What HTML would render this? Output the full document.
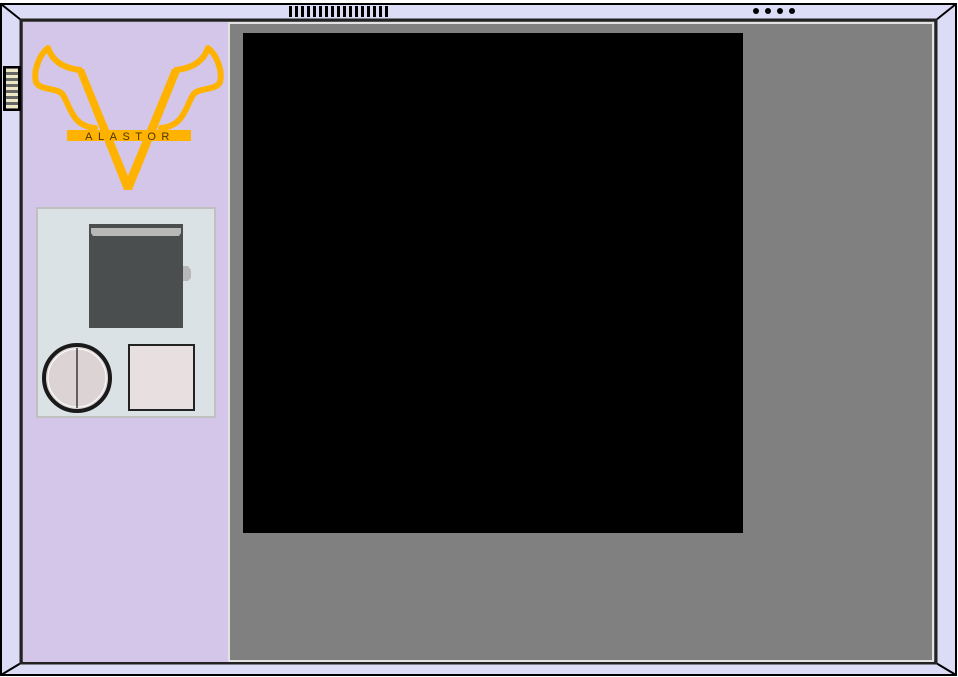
<!DOCTYPE html>
<html><head><meta charset="utf-8"><style>
html,body{margin:0;padding:0;background:#fff;width:958px;height:677px;overflow:hidden}
svg{display:block}
</style></head><body>
<svg width="958" height="677" viewBox="0 0 958 677" xmlns="http://www.w3.org/2000/svg">
<rect x="1" y="4" width="955" height="671" fill="#dcdcf6" stroke="#000" stroke-width="2"/>
<line x1="1" y1="4" x2="21" y2="20" stroke="#000" stroke-width="2"/>
<line x1="956" y1="4" x2="936" y2="20" stroke="#000" stroke-width="2"/>
<line x1="1" y1="675" x2="21" y2="663" stroke="#000" stroke-width="2"/>
<line x1="956" y1="675" x2="936" y2="663" stroke="#000" stroke-width="2"/>
<rect x="21" y="20" width="915" height="643" fill="#808080" stroke="#222" stroke-width="3"/>
<rect x="229" y="23" width="704" height="638" fill="none" stroke="#e2e2e2" stroke-width="2"/>
<rect x="231" y="24" width="700" height="636" fill="#808080"/>
<rect x="23" y="22" width="205" height="640" fill="#d3c6e8"/>
<rect x="243" y="33" width="500" height="500" fill="#000"/>
<g fill="#000">
<rect x="289" y="6" width="3" height="11"/><rect x="295" y="6" width="3" height="11"/><rect x="301" y="6" width="3" height="11"/><rect x="307" y="6" width="3" height="11"/><rect x="313" y="6" width="3" height="11"/><rect x="319" y="6" width="3" height="11"/><rect x="325" y="6" width="3" height="11"/><rect x="331" y="6" width="3" height="11"/><rect x="337" y="6" width="3" height="11"/><rect x="343" y="6" width="3" height="11"/><rect x="349" y="6" width="3" height="11"/><rect x="355" y="6" width="3" height="11"/><rect x="361" y="6" width="3" height="11"/><rect x="367" y="6" width="3" height="11"/><rect x="373" y="6" width="3" height="11"/><rect x="379" y="6" width="3" height="11"/><rect x="385" y="6" width="3" height="11"/>
<circle cx="756" cy="11" r="3"/><circle cx="768" cy="11" r="3"/><circle cx="780" cy="11" r="3"/><circle cx="792" cy="11" r="3"/>
</g>
<rect x="3" y="66" width="18" height="45" fill="#000"/>
<rect x="6" y="68" width="12" height="41" fill="#666"/>
<g fill="#eee8c4">
<rect x="6" y="69" width="12" height="3"/><rect x="6" y="75" width="12" height="3"/><rect x="6" y="81" width="12" height="3"/><rect x="6" y="87" width="12" height="3"/><rect x="6" y="93" width="12" height="3"/><rect x="6" y="99" width="12" height="3"/><rect x="6" y="105" width="12" height="3"/>
</g>
<g stroke="#ffb300" stroke-width="6" fill="none" stroke-linecap="round" stroke-linejoin="round">
<path d="M80,70 C62,68 52,60 48,48 C40,54 33,70 36,82 C40,91 58,87 63,95 C70,106 72,126 95,128"/>
<path d="M176,70 C194,68 204,60 208,48 C216,54 223,70 220,82 C216,91 198,87 193,95 C186,106 184,126 161,128"/>
</g>
<polygon points="76,69 84,69 128,176 172,69 181,69 132,190 124,190" fill="#ffb300"/>
<rect x="67" y="130" width="124" height="11" fill="#ffb300"/>
<text x="130" y="140" text-anchor="middle" font-family="Liberation Sans, sans-serif" font-size="11" letter-spacing="5.5" fill="#4a3300">ALASTOR</text>
<rect x="37" y="208" width="178" height="209" fill="#dbe2e6" stroke="#c0c0c0" stroke-width="2"/>
<rect x="89" y="224" width="94" height="104" fill="#4a4e4f"/>
<path d="M91,228 L181,228 L181,233 L179,236 L93,236 L91,233 Z" fill="#bab8b6"/>
<path d="M183,266 L188,266 L191,270 L191,278 L188,281 L183,281 Z" fill="#b8b8b8"/>
<circle cx="77" cy="378" r="33" fill="#dcd4d4" stroke="#1a1a1a" stroke-width="4"/>
<circle cx="77" cy="378" r="29" fill="none" stroke="#fff" stroke-width="1"/>
<line x1="77" y1="348" x2="77" y2="408" stroke="#111" stroke-width="1.2"/>
<rect x="129" y="345" width="65" height="65" fill="#e8e0e0" stroke="#222" stroke-width="2"/>
</svg>
</body></html>
